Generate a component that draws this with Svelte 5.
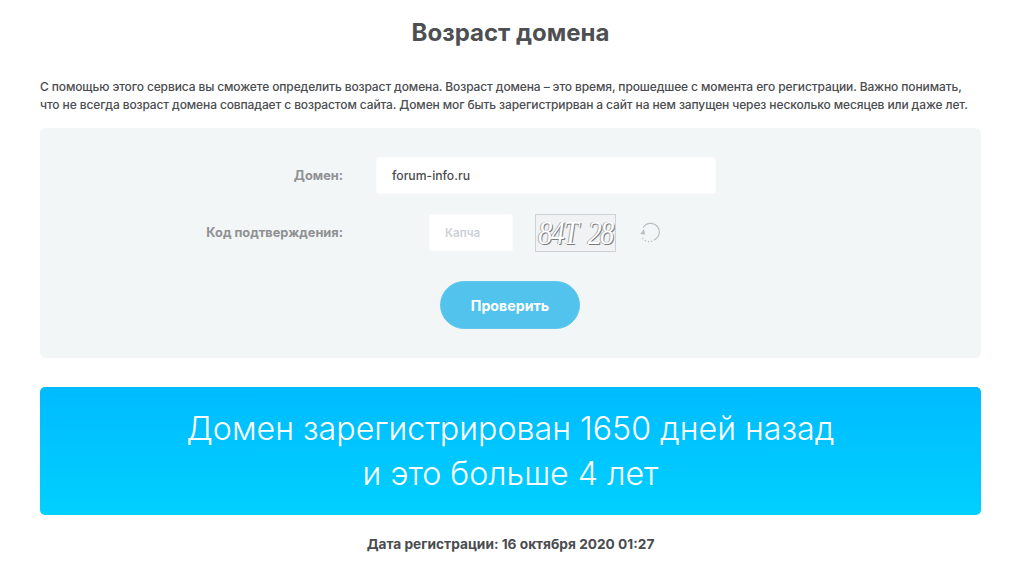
<script>
  let domain = $state("forum-info.ru");
  let captcha = $state("");
</script>

<main>
  <h1>Возраст домена</h1>
  <p class="intro">
    С помощью этого сервиса вы сможете определить возраст домена. Возраст домена – это время, прошедшее с момента его регистрации. Важно понимать,<br />
    что не всегда возраст домена совпадает с возрастом сайта. Домен мог быть зарегистрирван а сайт на нем запущен через несколько месяцев или даже лет.
  </p>

  <form class="panel" onsubmit={(e) => e.preventDefault()}>
    <div class="row">
      <label for="domain">Домен:</label>
      <input id="domain" class="domain" bind:value={domain} />
    </div>
    <div class="row code">
      <label for="code">Код подтверждения:</label>
      <input id="code" class="captcha" placeholder="Капча" bind:value={captcha} />
      <div class="captcha-img"><span>84Т 28</span></div>
      <svg class="reload" width="22" height="22" viewBox="0 0 22 22" fill="none" stroke="#b9bdbf" stroke-width="1.2">
        <path d="M5.2 5.8A8.6 8.6 0 1 1 17 17.4" />
        <path d="M17 17.4A8.6 8.6 0 0 1 3.4 14.6" stroke-dasharray="1.3 1.9" />
        <path d="M6 7L2.2 12L7 12.4Z" fill="#b9bdbf" stroke="none" />
      </svg>
    </div>
    <button type="submit">Проверить</button>
  </form>

  <div class="result">Домен зарегистрирован 1650 дней назад<br />и это больше 4 лет</div>
  <p class="date">Дата регистрации: 16 октября 2020 01:27</p>
</main>

<style>
  :global(body) {
    background: #fff;
    font-family: "Inter", "Open Sans", sans-serif;
    color: #4a4c4f;
  }

  main {
    padding: 0 43px 0 40px;
    overflow: hidden;
    height: 561px;
    box-sizing: border-box;
  }

  h1 {
    margin: 0;
    padding-top: 19px;
    font-size: 24px;
    line-height: 28px;
    font-weight: 700;
    text-align: center;
    color: #4d4f52;
  }

  .intro {
    margin: 31px 0 0;
    font-size: 12px;
    line-height: 18px;
    font-weight: 500;
    letter-spacing: -0.115px;
    white-space: nowrap;
    color: #4a4c4f;
  }

  .panel {
    margin-top: 14px;
    height: 230px;
    box-sizing: border-box;
    padding-top: 29px;
    background: #f3f6f7;
    border-radius: 6px;
    display: flex;
    flex-direction: column;
  }

  .row {
    display: flex;
    align-items: center;
    height: 37px;
  }

  .code {
    margin-top: 20px;
  }

  label {
    width: 303px;
    text-align: right;
    font-size: 12.8px;
    font-weight: 700;
    color: #8f9193;
  }

  input {
    box-sizing: border-box;
    height: 37px;
    border: 1px solid #fbfcfc;
    background: #fff;
    font-family: inherit;
    font-size: 12.2px;
    font-weight: 500;
    color: #4a4c4f;
    outline: none;
    border-radius: 2px;
  }

  .domain {
    width: 340px;
    margin-left: 33px;
    padding: 0 15px;
  }

  .captcha {
    width: 84px;
    margin-left: 86px;
    padding: 0 0 0 15px;
    font-size: 11.5px;
    font-weight: 600;
  }

  .captcha::placeholder {
    color: #ccd0d6;
    opacity: 1;
  }

  .captcha-img {
    box-sizing: border-box;
    width: 81px;
    height: 38px;
    margin-left: 22px;
    border: 1px solid #cfd2d4;
    background: #f0f2f3;
    display: flex;
    align-items: center;
    justify-content: center;
    overflow: hidden;
  }

  .captcha-img span {
    font-family: "Liberation Serif", serif;
    font-style: italic;
    font-size: 28px;
    letter-spacing: -1.5px;
    word-spacing: 5px;
    color: #fff;
    white-space: nowrap;
    transform: scaleY(1.2);
    text-shadow: 1px 1px 0 #7a7d7f, -1px 0 0 #a9acae;
  }

  .reload {
    margin-left: 22px;
  }

  button {
    align-self: center;
    width: 140px;
    height: 48px;
    margin-top: 30px;
    margin-right: 1px;
    border: 1px solid #64c8ee;
    border-radius: 24px;
    background: #52c3ed;
    color: #fff;
    font-family: inherit;
    font-size: 14.2px;
    font-weight: 700;
  }

  .result {
    margin-top: 29px;
    height: 128px;
    box-sizing: border-box;
    padding-top: 19px;
    border-radius: 5px;
    background: linear-gradient(#00bbff, #00d0ff);
    color: #fff;
    font-size: 32.2px;
    line-height: 45px;
    font-weight: 300;
    text-align: center;
  }

  .date {
    margin: 20px 0 0;
    font-size: 13.7px;
    line-height: 18px;
    font-weight: 700;
    text-align: center;
  }
</style>
